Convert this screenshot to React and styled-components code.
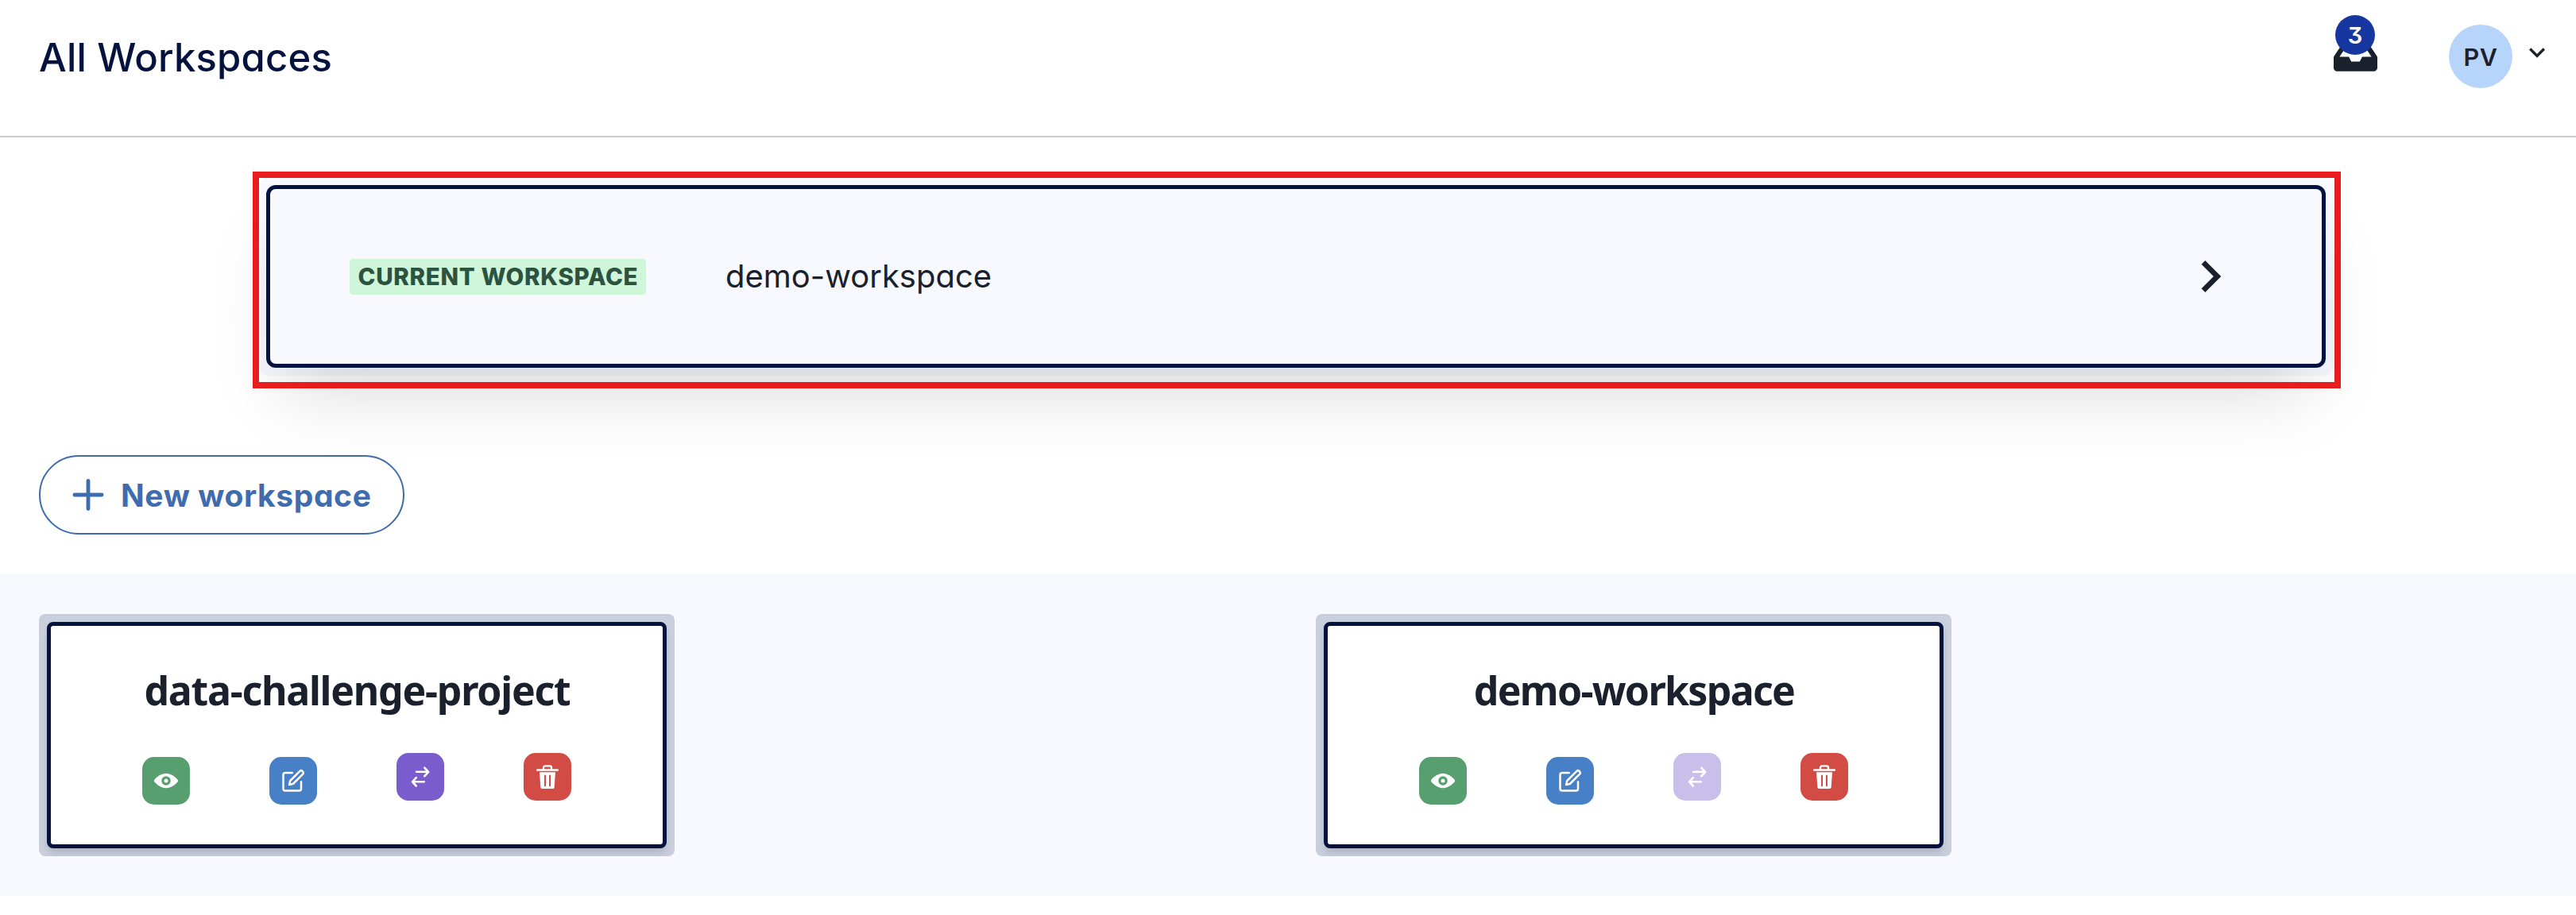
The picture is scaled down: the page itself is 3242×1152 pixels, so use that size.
import React from "react";
import styled, { createGlobalStyle } from "styled-components";
import { FaInbox } from "react-icons/fa";

const GlobalStyle = createGlobalStyle`
  *, *::before, *::after { box-sizing: border-box; }
  body {
    margin: 0;
    background: #fff;
    color: #1a202c;
    font-family: Inter, "Liberation Sans", sans-serif;
    font-feature-settings: "cv11", "cv09";
    -webkit-font-smoothing: antialiased;
  }
  button { font: inherit; font-feature-settings: inherit; padding: 0; border: 0; background: none; color: inherit; }
`;

const Page = styled.div`
  display: flex;
  flex-direction: column;
  min-height: 1152px;
`;

const Header = styled.header`
  display: flex;
  justify-content: space-between;
  align-items: flex-start;
  height: 173px;
  padding: 31px 29px 0 49px;
  border-bottom: 2px solid #ccc;
`;

const Title = styled.h1`
  margin: 0;
  font-size: 49px;
  line-height: 83px;
  font-weight: 500;
  letter-spacing: 0.2px;
  color: #03123f;
  white-space: nowrap;
`;

const HeaderActions = styled.div`
  display: flex;
  align-items: flex-start;
`;

const Inbox = styled.button`
  position: relative;
  width: 55px;
  height: 49px;
  margin: 16px 90px 0 0;
  svg { display: block; width: 55px; height: 49px; }
`;

const Count = styled.span`
  position: absolute;
  left: 2px;
  top: -28px;
  width: 50px;
  height: 50px;
  border-radius: 50%;
  background: #1636a0;
  color: #fff;
  font-size: 29px;
  line-height: 51px;
  font-weight: 600;
  text-align: center;
`;

const Avatar = styled.div`
  width: 80px;
  height: 80px;
  border-radius: 50%;
  background: #b7d4fb;
  font-size: 30.5px;
  line-height: 82px;
  font-weight: 600;
  letter-spacing: 0.5px;
  text-align: center;
`;

const MenuToggle = styled.button`
  width: 40px;
  height: 40px;
  margin: 15px 0 0 11px;
  svg { display: block; }
`;

const Current = styled.section`
  position: relative;
  align-self: flex-start;
  width: 2612px;
  margin: 50px 0 0 325px;
  padding: 10px;
  border-radius: 14px;
  background: #f8f9ff;
  &::after {
    content: "";
    position: absolute;
    inset: -7px -9px -16px -7px;
    border: 8px solid #e81c1c;
    pointer-events: none;
  }
`;

const CurrentCard = styled.div`
  display: flex;
  align-items: center;
  height: 230px;
  padding: 0 100px;
  border: 5px solid #03123f;
  border-radius: 12px;
  background: #f8f9ff;
  box-shadow: 0 50px 90px -20px rgba(0, 0, 0, 0.15);
  svg { display: block; margin-left: auto; }
`;

const Badge = styled.span`
  width: 373px;
  height: 45px;
  margin-top: 1px;
  padding-left: 10.5px;
  border-radius: 4px;
  background: #cff6d8;
  color: #2d523f;
  font-size: 29.5px;
  line-height: 45px;
  font-weight: 800;
  white-space: nowrap;
  letter-spacing: 0.7px;
`;

const CurrentName = styled.span`
  margin-left: 100px;
  font-size: 40px;
  line-height: 56px;
  white-space: nowrap;
`;

const NewButton = styled.button`
  display: flex;
  align-items: center;
  align-self: flex-start;
  width: 460px;
  height: 100px;
  margin: 100px 0 50px 49px;
  padding-left: 40px;
  border: 2px solid #3f6cae;
  border-radius: 50px;
  color: #3f6cae;
  font-size: 39px;
  font-weight: 700;
  white-space: nowrap;
  letter-spacing: 0.6px;
  svg { flex: none; margin-right: 21px; }
`;

const Grid = styled.section`
  display: grid;
  grid-template-columns: 1fr 1fr;
  column-gap: 70px;
  height: 405px;
  padding: 50px 49px;
  background: #f8f9ff;
`;

const CardFrame = styled.article`
  width: 800px;
  height: 305px;
  padding: 10px;
  border-radius: 8px;
  background: #c9cfdd;
  overflow: hidden;
`;

const Card = styled.div`
  display: flex;
  flex-direction: column;
  align-items: center;
  height: 285px;
  padding-top: 41px;
  border: 5px solid #03123f;
  border-radius: 8px;
  background: #fff;
  box-shadow: 0 8px 12px -2px rgba(0, 0, 0, 0.1), 0 4px 8px -2px rgba(0, 0, 0, 0.06);
`;

const CardTitle = styled.h2`
  margin: 0;
  padding-left: 1px;
  font: 700 50px/80px "Noto Sans", "Open Sans", sans-serif;
  white-space: nowrap;
  letter-spacing: ${(p) => p.$tracking}px;
`;

const Actions = styled.div`
  display: flex;
  gap: 100px;
  margin-top: 39px;
`;

const Action = styled.button`
  display: grid;
  place-items: center;
  width: 60px;
  height: 60px;
  margin-top: ${(p) => (p.$low ? 5 : 0)}px;
  border-radius: 15px;
  background: ${(p) => p.$bg};
  color: #fff;
  svg { display: block; }
`;

const Eye = () => (
  <svg width="30" height="30" viewBox="0 0 24 24" fill="currentColor">
    <path d="M23.432,10.524C20.787,7.614,16.4,4.538,12,4.6,7.6,4.537,3.213,7.615.568,10.524a2.211,2.211,0,0,0,0,2.948C3.182,16.351,7.507,19.4,11.839,19.4h.308c4.347,0,8.671-3.049,11.288-5.929A2.21,2.21,0,0,0,23.432,10.524ZM7.4,12A4.6,4.6,0,1,1,12,16.6,4.6,4.6,0,0,1,7.4,12Z" />
    <circle cx="12" cy="12" r="2" />
  </svg>
);

const Edit = () => (
  <svg width="30" height="30" viewBox="0 0 24 24" fill="none" stroke="currentColor" strokeWidth="2" strokeLinecap="round" strokeLinejoin="round">
    <path d="M11 4H4a2 2 0 0 0-2 2v14a2 2 0 0 0 2 2h14a2 2 0 0 0 2-2v-7" />
    <path d="M18.5 2.5a2.121 2.121 0 0 1 3 3L12 15l-4 1 1-4z" />
  </svg>
);

const Swap = () => (
  <svg width="30" height="30" viewBox="0 0 30 30" fill="none" stroke="currentColor" strokeWidth="2.6" strokeLinecap="round" strokeLinejoin="round">
    <path d="M10.2 8.8H25M20.3 3.6L25.2 8.8L20.3 14.2" />
    <path d="M19.8 21.3H5M9.8 16.1L5 21.3L9.8 26.5" />
  </svg>
);

const Trash = () => (
  <svg width="30" height="30" viewBox="0 0 30 30" fill="currentColor">
    <path d="M10 6.2V3.4a2 2 0 0 1 2-2h6a2 2 0 0 1 2 2v2.8" fill="none" stroke="currentColor" strokeWidth="2.4" />
    <rect x="1" y="5.2" width="28" height="2.6" rx="1.3" />
    <path fillRule="evenodd" d="M5 9.2H25L23.7 28.1A2 2 0 0 1 21.7 30H8.3A2 2 0 0 1 6.3 28.1ZM11 13.4V26.2a1 1 0 0 0 2 0V13.4a1 1 0 0 0-2 0ZM17 13.4V26.2a1 1 0 0 0 2 0V13.4a1 1 0 0 0-2 0Z" />
  </svg>
);

const ChevronDown = () => (
  <svg width="40" height="40" viewBox="0 0 24 24" fill="currentColor">
    <path d="M16.59 8.59L12 13.17 7.41 8.59 6 10l6 6 6-6z" />
  </svg>
);

const ChevronRight = () => (
  <svg width="80" height="80" viewBox="0 0 24 24" fill="currentColor">
    <path d="M10 6L8.59 7.41 13.17 12l-4.58 4.59L10 18l6-6z" />
  </svg>
);

const Plus = () => (
  <svg width="40" height="40" viewBox="0 0 40 40" stroke="currentColor" strokeWidth="4.8" strokeLinecap="round">
    <path d="M20 2.4V37.6M2.9 20H37.1" />
  </svg>
);

const workspaces = [
  { name: "data-challenge-project", current: false, tracking: -1.25 },
  { name: "demo-workspace", current: true, tracking: -1.7 },
];

function WorkspaceCard({ name, current, tracking }) {
  return (
    <CardFrame>
      <Card>
        <CardTitle $tracking={tracking}>{name}</CardTitle>
        <Actions>
          <Action $bg="#589f70" $low aria-label="View"><Eye /></Action>
          <Action $bg="#4880c8" $low aria-label="Edit"><Edit /></Action>
          <Action $bg={current ? "#cabeea" : "#7b5ccd"} disabled={current} aria-label="Switch"><Swap /></Action>
          <Action $bg="#d24c45" aria-label="Delete"><Trash /></Action>
        </Actions>
      </Card>
    </CardFrame>
  );
}

export default function App() {
  return (
    <Page>
      <GlobalStyle />
      <Header>
        <Title>All Workspaces</Title>
        <HeaderActions>
          <Inbox><FaInbox /><Count>3</Count></Inbox>
          <Avatar>PV</Avatar>
          <MenuToggle><ChevronDown /></MenuToggle>
        </HeaderActions>
      </Header>
      <Current>
        <CurrentCard>
          <Badge>CURRENT WORKSPACE</Badge>
          <CurrentName>demo-workspace</CurrentName>
          <ChevronRight />
        </CurrentCard>
      </Current>
      <NewButton>
        <Plus />
        New workspace
      </NewButton>
      <Grid>
        {workspaces.map((w) => <WorkspaceCard key={w.name} {...w} />)}
      </Grid>
    </Page>
  );
}
